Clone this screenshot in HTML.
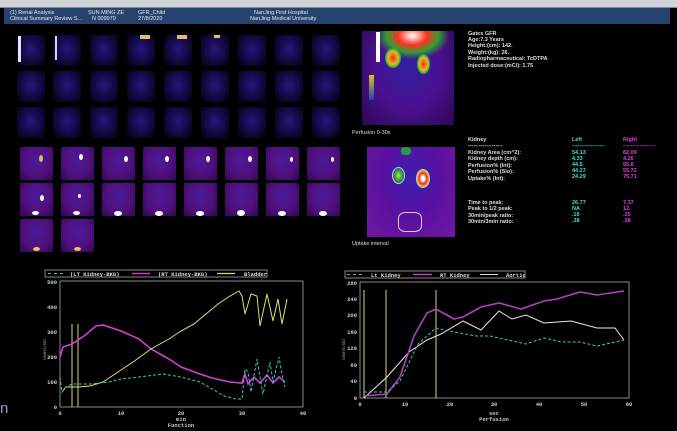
<!DOCTYPE html>
<html><head><meta charset="utf-8"><style>
*{margin:0;padding:0;box-sizing:border-box}
body{width:677px;height:431px;background:#000;overflow:hidden;position:relative;font-family:"Liberation Sans",sans-serif;color:#ddd}
.abs{position:absolute}
.t{position:absolute;font-size:5.5px;line-height:6px;white-space:nowrap;font-weight:bold}
.p{position:absolute;width:28px;height:31px;background:radial-gradient(ellipse at 50% 45%,#24187a 0%,#170c52 40%,#0c0428 75%,#000 100%)}
.u{position:absolute;width:33px;height:33px;background:radial-gradient(ellipse at 50% 40%,#4a1a9a 0%,#50107e 55%,#300850 100%)}
.k{position:absolute;border-radius:50%}
</style></head><body>
<div class="abs" style="left:0;top:0;width:677px;height:7px;background:#cfd3d8"></div>
<div class="abs" style="left:0;top:7px;width:677px;height:1px;background:#888"></div>
<div class="abs" style="left:4px;top:8px;width:666px;height:16px;background:#26426e"></div>
<div class="t" style="left:10px;top:10px;color:#e8e8f0;font-weight:normal">(1) Renal Analysis</div>
<div class="t" style="left:10px;top:16px;color:#e8e8f0;font-weight:normal">Clinical Summary Review S...</div>
<div class="t" style="left:88px;top:10px;color:#e8e8f0;font-weight:normal">SUN MING ZE</div>
<div class="t" style="left:92px;top:16px;color:#e8e8f0;font-weight:normal">N 009979</div>
<div class="t" style="left:138px;top:10px;color:#e8e8f0;font-weight:normal">GFR_Child</div>
<div class="t" style="left:138px;top:16px;color:#e8e8f0;font-weight:normal">27/8/2020</div>
<div class="t" style="left:254px;top:10px;color:#e8e8f0;font-weight:normal">NanJing First Hospital</div>
<div class="t" style="left:250px;top:16px;color:#e8e8f0;font-weight:normal">NanJing Medical University</div>

<div class="p" style="left:17px;top:35px"></div><div class="p" style="left:53px;top:35px"></div><div class="p" style="left:90px;top:35px"></div><div class="p" style="left:127px;top:35px"></div><div class="p" style="left:164px;top:35px"></div><div class="p" style="left:201px;top:35px"></div><div class="p" style="left:238px;top:35px"></div><div class="p" style="left:275px;top:35px"></div><div class="p" style="left:312px;top:35px"></div>
<div class="p" style="left:17px;top:71px"></div><div class="p" style="left:53px;top:71px"></div><div class="p" style="left:90px;top:71px"></div><div class="p" style="left:127px;top:71px"></div><div class="p" style="left:164px;top:71px"></div><div class="p" style="left:201px;top:71px"></div><div class="p" style="left:238px;top:71px"></div><div class="p" style="left:275px;top:71px"></div><div class="p" style="left:312px;top:71px"></div>
<div class="p" style="left:17px;top:107px"></div><div class="p" style="left:53px;top:107px"></div><div class="p" style="left:90px;top:107px"></div><div class="p" style="left:127px;top:107px"></div><div class="p" style="left:164px;top:107px"></div><div class="p" style="left:201px;top:107px"></div><div class="p" style="left:238px;top:107px"></div><div class="p" style="left:275px;top:107px"></div><div class="p" style="left:312px;top:107px"></div>
<div class="abs" style="left:18px;top:36px;width:3px;height:26px;background:#e8e0ff"></div>
<div class="abs" style="left:55px;top:36px;width:2px;height:24px;background:#d8d0ff"></div>
<div class="abs" style="left:140px;top:35px;width:10px;height:4px;background:#e0c060"></div>
<div class="abs" style="left:177px;top:35px;width:10px;height:4px;background:#e0c060"></div>
<div class="abs" style="left:214px;top:35px;width:6px;height:3px;background:#e0c060"></div>

<div class="u" style="left:20px;top:147px"></div><div class="u" style="left:61px;top:147px"></div><div class="u" style="left:102px;top:147px"></div><div class="u" style="left:143px;top:147px"></div><div class="u" style="left:184px;top:147px"></div><div class="u" style="left:225px;top:147px"></div><div class="u" style="left:266px;top:147px"></div><div class="u" style="left:307px;top:147px"></div>
<div class="u" style="left:20px;top:183px"></div><div class="u" style="left:61px;top:183px"></div><div class="u" style="left:102px;top:183px"></div><div class="u" style="left:143px;top:183px"></div><div class="u" style="left:184px;top:183px"></div><div class="u" style="left:225px;top:183px"></div><div class="u" style="left:266px;top:183px"></div><div class="u" style="left:307px;top:183px"></div>
<div class="u" style="left:20px;top:219px"></div><div class="u" style="left:61px;top:219px"></div>
<div class="k" style="left:39px;top:155px;width:4px;height:7px;background:#c0d040"></div>
<div class="k" style="left:79px;top:154px;width:4px;height:6px;background:#fff"></div>
<div class="k" style="left:124px;top:156px;width:4px;height:6px;background:#fff"></div>
<div class="k" style="left:165px;top:156px;width:4px;height:6px;background:#fff"></div>
<div class="k" style="left:206px;top:156px;width:4px;height:6px;background:#fff"></div>
<div class="k" style="left:248px;top:156px;width:4px;height:6px;background:#fff"></div>
<div class="k" style="left:290px;top:157px;width:3px;height:5px;background:#fff"></div>
<div class="k" style="left:331px;top:157px;width:3px;height:5px;background:#fff"></div>
<div class="k" style="left:40px;top:195px;width:4px;height:6px;background:#fff"></div>
<div class="k" style="left:78px;top:194px;width:3px;height:4px;background:#fff"></div>
<div class="k" style="left:32px;top:211px;width:7px;height:4px;background:#fff"></div>
<div class="k" style="left:73px;top:211px;width:7px;height:4px;background:#fff"></div>
<div class="k" style="left:114px;top:211px;width:8px;height:5px;background:#fff"></div>
<div class="k" style="left:155px;top:211px;width:8px;height:5px;background:#fff"></div>
<div class="k" style="left:196px;top:211px;width:8px;height:5px;background:#fff"></div>
<div class="k" style="left:237px;top:210px;width:8px;height:6px;background:#fff"></div>
<div class="k" style="left:278px;top:211px;width:8px;height:5px;background:#fff"></div>
<div class="k" style="left:319px;top:211px;width:8px;height:5px;background:#fff"></div>
<div class="k" style="left:33px;top:247px;width:7px;height:4px;background:#f0c060"></div>
<div class="k" style="left:74px;top:247px;width:7px;height:4px;background:#f0c060"></div>

<div class="abs" style="left:362px;top:31px;width:92px;height:94px;background:radial-gradient(ellipse 40% 25% at 55% 5%,#ffffff 0%,#ff3020 40%,#30a030 70%,rgba(32,48,192,0) 100%),radial-gradient(ellipse at 50% 40%,#3020a0 0%,#4a1090 50%,#2a0850 100%)"></div>
<div class="k" style="left:385px;top:48px;width:16px;height:20px;background:radial-gradient(#ff2020,#e0c020 45%,#20a040 70%,#2040c0)"></div>
<div class="k" style="left:417px;top:54px;width:13px;height:20px;background:radial-gradient(#ff2020,#e0c020 45%,#20a040 70%,#2040c0)"></div>
<div class="abs" style="left:376px;top:32px;width:4px;height:30px;background:#fff"></div>
<div class="abs" style="left:369px;top:75px;width:5px;height:25px;background:linear-gradient(#e0c020,#2040c0)"></div>
<div class="t" style="left:352px;top:130px;font-weight:normal;color:#ddd">Perfusion 0-30s</div>
<div class="abs" style="left:367px;top:147px;width:88px;height:90px;background:radial-gradient(ellipse at 50% 35%,#3a20b0 0%,#5810a0 45%,#7018a0 100%)"></div>
<div class="k" style="left:392px;top:167px;width:13px;height:17px;background:radial-gradient(#e0e020,#20a040 50%,#2040d0 80%);border:1px solid #ccc"></div>
<div class="k" style="left:416px;top:169px;width:14px;height:19px;background:radial-gradient(#fff 20%,#ff2020 45%,#e0c020 65%,#2040d0 90%);border:1px solid #ccc"></div>
<div class="abs" style="left:401px;top:147px;width:10px;height:8px;background:#20a040;border-radius:40%"></div>
<div class="abs" style="left:398px;top:212px;width:24px;height:20px;border:1px solid #e8c0e8;border-radius:30%"></div>
<div class="t" style="left:352px;top:241px;font-weight:normal;color:#ddd">Uptake interval</div>

<div class="t" style="left:468px;top:31px">Gates GFR</div>
<div class="t" style="left:468px;top:37px">Age:7.3 Years</div>
<div class="t" style="left:468px;top:43px">Height:(cm): 142.</div>
<div class="t" style="left:468px;top:50px">Weight:(kg): 26.</div>
<div class="t" style="left:468px;top:56px">Radiopharmaceutical: TcDTPA</div>
<div class="t" style="left:468px;top:63px">Injected dose:(mCi): 1.75</div>
<div class="t" style="left:468px;top:137px">Kidney</div>
<div class="t" style="left:468px;top:143px">-------------------</div>
<div class="t" style="left:468px;top:150px">Kidney Area (cm^2):</div>
<div class="t" style="left:468px;top:156px">Kidney depth (cm):</div>
<div class="t" style="left:468px;top:163px">Perfusion% (Int):</div>
<div class="t" style="left:468px;top:169px">Perfusion% (Slo):</div>
<div class="t" style="left:468px;top:176px">Uptake% (Int):</div>
<div class="t" style="left:468px;top:200px">Time to peak:</div>
<div class="t" style="left:468px;top:206px">Peak to 1/2 peak:</div>
<div class="t" style="left:468px;top:213px">30min/peak ratio:</div>
<div class="t" style="left:468px;top:219px">30min/3min ratio:</div>
<div class="t" style="left:572px;top:137px;color:#40e0d0">Left</div>
<div class="t" style="left:572px;top:143px;color:#40e0d0">------------------</div>
<div class="t" style="left:572px;top:150px;color:#40e0d0">54.13<br>4.33<br>44.5<br>44.27<br>24.29</div>
<div class="t" style="left:572px;top:200px;color:#40e0d0">26.77<br>NA<br>.16<br>.38</div>
<div class="t" style="left:623px;top:137px;color:#e040e0">Right</div>
<div class="t" style="left:623px;top:143px;color:#e040e0">------------------</div>
<div class="t" style="left:623px;top:150px;color:#e040e0">82.09<br>4.26<br>55.6<br>55.72<br>75.71</div>
<div class="t" style="left:623px;top:200px;color:#e040e0">7.37<br>12.<br>.25<br>.38</div>
<div class="abs" style="left:0;top:400px;font-size:15px;color:#8aa0c0;font-family:'Liberation Sans',sans-serif">n</div>

<svg class="abs" style="left:0;top:0" width="677" height="431" font-family="Liberation Mono,monospace" font-size="5.5" font-weight="bold">
<rect x="45" y="270" width="222" height="7" fill="none" stroke="#aaa" stroke-width="0.8"/>
<line x1="48" y1="273.5" x2="66" y2="273.5" stroke="#40c0c0" stroke-dasharray="3,3"/>
<text x="70" y="276" fill="#ddd">(LT Kidney-BKG)</text>
<line x1="132" y1="273.5" x2="150" y2="273.5" stroke="#c040c0" stroke-width="1.5"/>
<text x="158" y="276" fill="#ddd">(RT Kidney-BKG)</text>
<line x1="217" y1="273.5" x2="235" y2="273.5" stroke="#d8d890" stroke-width="1.2"/>
<text x="244" y="276" fill="#ddd">Bladder</text>
<rect x="60" y="281" width="243" height="126" fill="none" stroke="#aaa" stroke-width="0.8"/>
<g fill="#ccc" text-anchor="end"><text x="57" y="284">500</text><text x="57" y="309">400</text><text x="57" y="334">300</text><text x="57" y="359">200</text><text x="57" y="384">100</text><text x="57" y="409">0</text></g>
<g fill="#ccc" text-anchor="middle"><text x="60" y="415">0</text><text x="121" y="415">10</text><text x="181" y="415">20</text><text x="242" y="415">30</text><text x="303" y="415">40</text><text x="181" y="421">min</text><text x="181" y="427">Function</text></g>
<text x="0" y="0" fill="#888" font-size="3.5" transform="translate(46,360) rotate(-90)">COUNTS/SEC</text>
<line x1="72" y1="407" x2="72" y2="324" stroke="#e0d080" stroke-width="1"/>
<line x1="78" y1="407" x2="78" y2="324" stroke="#e0d080" stroke-width="1"/>
<polyline fill="none" stroke="#d040d8" stroke-width="1.6" points="60,357 63,347 72,344 84,336 96,326 103,325 121,331 139,339 151,349 169,359 181,367 200,374 212,378 230,382 242,383 245,374 248,384 254,377 260,383 267,375 273,383 279,377 285,382"/>
<polyline fill="none" stroke="#e0e070" stroke-width="1" points="62,392 66,387 78,387 90,386 103,382 115,374 133,362 151,349 169,339 181,331 194,324 206,314 218,304 230,296 239,291 242,296 245,314 251,294 257,296 260,326 267,294 273,321 278,299 282,324 287,299"/>
<polyline fill="none" stroke="#40c8b0" stroke-width="1" stroke-dasharray="3,2" points="60,377 62,392 66,387 72,384 90,384 109,382 121,379 139,377 163,374 181,377 200,382 212,389 224,396 236,399 242,399 245,369 248,372 251,392 257,359 260,377 263,394 270,362 273,382 279,357 282,374 285,387"/>
<rect x="345" y="271" width="180" height="7" fill="none" stroke="#aaa" stroke-width="0.8"/>
<line x1="347" y1="274.5" x2="363" y2="274.5" stroke="#40c0c0" stroke-dasharray="3,3"/>
<text x="371" y="277" fill="#ddd">Lt Kidney</text>
<line x1="413" y1="274.5" x2="432" y2="274.5" stroke="#c040c0" stroke-width="1.5"/>
<text x="440" y="277" fill="#ddd">RT Kidney</text>
<line x1="480" y1="274.5" x2="498" y2="274.5" stroke="#ddd" stroke-width="1"/>
<text x="506" y="277" fill="#ddd">Aortic</text>
<rect x="360" y="282" width="269" height="116" fill="none" stroke="#aaa" stroke-width="0.8"/>
<g fill="#ccc" text-anchor="end"><text x="357" y="285">280</text><text x="357" y="301">240</text><text x="357" y="317">200</text><text x="357" y="334">160</text><text x="357" y="350">120</text><text x="357" y="367">80</text><text x="357" y="383">40</text><text x="357" y="400">0</text></g>
<g fill="#ccc" text-anchor="middle"><text x="360" y="406">0</text><text x="405" y="406">10</text><text x="450" y="406">20</text><text x="494" y="406">30</text><text x="539" y="406">40</text><text x="584" y="406">50</text><text x="629" y="406">60</text><text x="494" y="415">sec</text><text x="494" y="421">Perfusion</text></g>
<text x="0" y="0" fill="#888" font-size="3.5" transform="translate(345,360) rotate(-90)">COUNTS/SEC</text>
<line x1="364" y1="398" x2="364" y2="290" stroke="#e0d080" stroke-width="1"/>
<line x1="386" y1="398" x2="386" y2="290" stroke="#e0d080" stroke-width="1"/>
<line x1="436" y1="398" x2="436" y2="290" stroke="#e0d080" stroke-width="1"/>
<polyline fill="none" stroke="#e8e8e8" stroke-width="1" points="364,398 387,377 409,352 427,340 441,334 463,321 481,330 499,311 512,319 526,315 544,323 571,321 597,328 615,328 624,340"/>
<polyline fill="none" stroke="#b040c0" stroke-width="1.6" points="364,396 387,394 400,377 414,336 427,313 436,309 454,319 463,317 481,307 499,303 521,309 544,301 557,299 580,292 597,295 624,291"/>
<polyline fill="none" stroke="#40c8b0" stroke-width="1" stroke-dasharray="3,2" points="364,392 387,392 400,381 418,344 436,328 454,332 476,336 490,336 508,340 526,344 544,338 562,342 580,342 597,346 624,340"/>
</svg>
</body></html>
